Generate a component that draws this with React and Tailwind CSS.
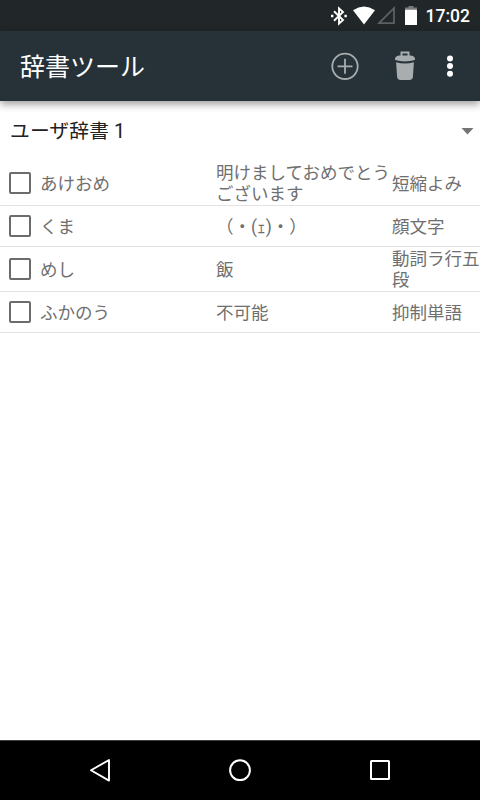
import React, { useState } from 'react';

const words = [
    { reading: 'あけおめ', word: '明けましておめでとうございます', type: '短縮よみ', height: 'h-[44px] pb-px' },
    { reading: 'くま', word: '（・(ｪ)・）', type: '顔文字', height: 'h-[41px]' },
    { reading: 'めし', word: '飯', type: '動詞ラ行五段', height: 'h-[45px]' },
    { reading: 'ふかのう', word: '不可能', type: '抑制単語', height: 'h-[41px]' },
];

function StatusBar() {
    return (
        <div className="h-[31px] shrink-0 bg-[#212729] flex items-center justify-end pr-[10px] text-white">
            <svg width="18" height="20" viewBox="0 0 18 20" className="mr-[5px]" fill="none" stroke="white" strokeWidth="1.9">
                <path d="M4 5.2 L13 14 L9 17.6 V2.4 L13 6 L4 14.8" />
                <path d="M1 10 H3.4 M14.4 10 H16.8" strokeWidth="2.4" />
            </svg>
            <svg width="22" height="19" viewBox="0 0 22 19" className="mr-[2px]">
                <path d="M0 4.2 Q11 -3 22 4.2 L11 18.4 Z" fill="white" />
            </svg>
            <svg width="19" height="19" viewBox="0 0 19 19" className="mr-[9px]">
                <path d="M2 17.2 L17 2.2 V17.2 Z" fill="none" stroke="#5c6163" strokeWidth="1.8" />
            </svg>
            <svg width="12" height="19" viewBox="0 0 12 19" className="mr-[9px]">
                <path d="M3.5 0 H8.5 V1.6 H12 V4 H0 V1.6 H3.5 Z" fill="#777b7d" />
                <rect y="3.8" width="12" height="15.2" rx="0.6" fill="white" />
            </svg>
            <span className="font-['Roboto'] font-medium text-[17.5px] leading-none pt-[3px]">17:02</span>
        </div>
    );
}

function AppBar() {
    return (
        <div className="relative z-10 h-[70px] shrink-0 bg-[#263238] flex items-center pl-[20px] pr-[26px] shadow-[0_3px_8px_rgba(0,0,0,0.4)]">
            <h1 className="grow pt-[2px] text-[25px] leading-none text-white">辞書ツール</h1>
            <button className="mr-[35px]">
                <svg width="28" height="28" viewBox="0 0 28 28" fill="none" stroke="#a8adaf" strokeWidth="1.8">
                    <circle cx="14" cy="14.3" r="12.7" />
                    <path d="M14 6.8 V21.8 M6.5 14.3 H21.5" />
                </svg>
            </button>
            <button className="mr-[31px]">
                <svg width="21" height="30" viewBox="0 0 21 30" className="translate-x-[0.5px]">
                    <path d="M7 5.5 V1.4 H14 V5.5" fill="none" stroke="#a8adaf" strokeWidth="2" />
                    <path d="M0.4 8.6 C0.4 6 3 4.6 5.5 4.6 H15.5 C18 4.6 20.6 6 20.6 8.6 C18 11 3 11 0.4 8.6 Z" fill="#a8adaf" />
                    <path d="M1.6 11.2 Q10.5 13.6 19.4 11.2 L18.4 26 Q18 29 14.8 29 H6.2 Q3 29 2.6 26 Z" fill="#a8adaf" />
                </svg>
            </button>
            <button>
                <svg width="8" height="24" viewBox="0 0 8 24" fill="white">
                    <circle cx="4" cy="4.5" r="3" />
                    <circle cx="4" cy="12.1" r="3" />
                    <circle cx="4" cy="19.7" r="3" />
                </svg>
            </button>
        </div>
    );
}

function NavBar() {
    return (
        <div className="h-[60px] shrink-0 bg-black border-t border-[#3c4042] flex items-center justify-between px-[88px]">
            <svg width="24" height="24" viewBox="0 0 24 24" fill="none" stroke="white" strokeWidth="1.9" strokeLinejoin="round">
                <path d="M3 11.3 L21 1 V21.6 Z" />
            </svg>
            <svg width="24" height="24" viewBox="0 0 24 24" fill="none" stroke="white" strokeWidth="2">
                <circle cx="12" cy="11.2" r="9.9" />
            </svg>
            <svg width="24" height="24" viewBox="0 0 24 24" fill="none" stroke="white" strokeWidth="2">
                <rect x="3" y="2" width="18" height="18" rx="0.5" />
            </svg>
        </div>
    );
}

function App() {
    const [checked, setChecked] = useState({});

    const toggle = (reading) => {
        setChecked({ ...checked, [reading]: !checked[reading] });
    };

    return (
        <div className="w-[480px] h-[800px] flex flex-col overflow-hidden bg-white font-['Roboto','Noto_Sans_CJK_JP',sans-serif]">
            <StatusBar />
            <AppBar />
            <div className="h-[61px] shrink-0 flex items-center justify-between pl-[10px] pr-[6px] text-[#212121]">
                <span className="text-[19.8px] leading-none tracking-[0.1px]">ユーザ辞書 1</span>
                <svg width="13" height="7" viewBox="0 0 13 7" fill="#757575">
                    <path d="M0.5 0 H12.5 L6.5 6.6 Z" />
                </svg>
            </div>
            <ul className="grow text-[17.5px] leading-[21px] text-[#6f6f6f]">
                {words.map((item) => (
                    <li key={item.reading} className={`${item.height} flex items-center border-b border-[#e3e3e3]`}>
                        <button
                            onClick={() => toggle(item.reading)}
                            className={`ml-[9px] mr-[9px] size-[22px] shrink-0 rounded-[2px] border-2 border-[#6c6c6c] ${checked[item.reading] ? 'bg-[#757575]' : ''}`}
                        />
                        <span className="w-[176px] shrink-0 pt-[2px]">{item.reading}</span>
                        <span className="w-[176px] shrink-0 pt-[2px]">{item.word}</span>
                        <span className="w-[88px] shrink-0 pt-[2px]">{item.type}</span>
                    </li>
                ))}
            </ul>
            <NavBar />
        </div>
    );
}

export default App;
